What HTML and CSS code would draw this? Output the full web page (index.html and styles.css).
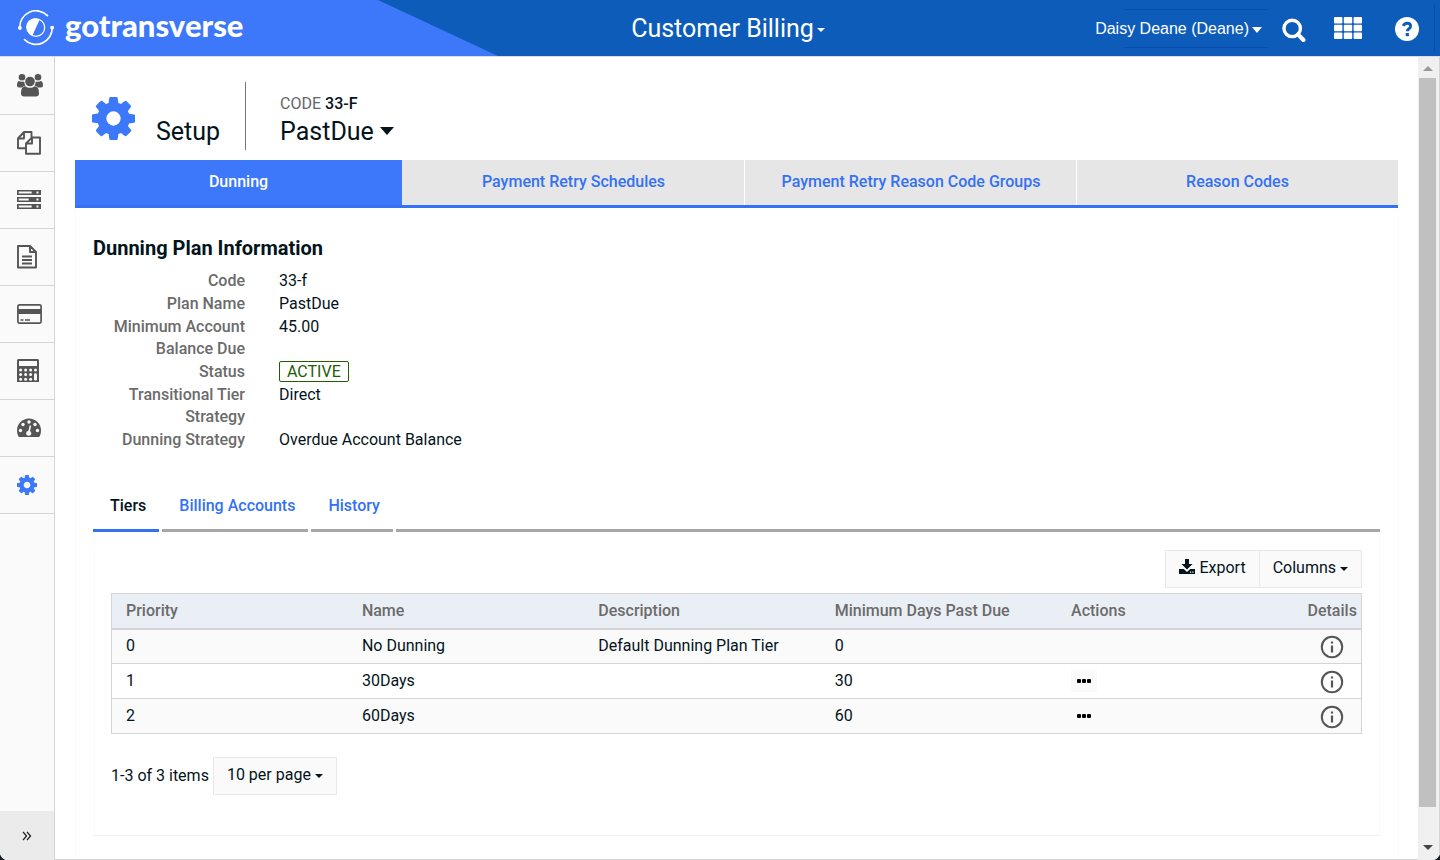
FILE: index.html
```html
<!DOCTYPE html>
<html lang="en">
<head>
<meta charset="utf-8">
<title>Customer Billing</title>
<link rel="stylesheet" href="styles.css">
</head>
<body>
<svg class="defs" aria-hidden="true">
  <symbol id="gear" viewBox="128 128 1536 1536"><path d="M1152 896q0-106-75-181t-181-75-181 75-75 181 75 181 181 75 181-75 75-181zm512-109v222q0 12-8 23t-20 13l-185 28q-19 54-39 91 35 50 107 138 10 12 10 25t-9 23q-27 37-99 108t-94 71q-12 0-26-9l-138-108q-44 23-91 38-16 136-29 186-7 28-36 28h-222q-14 0-24.5-8.5t-11.5-21.5l-28-184q-49-16-90-37l-141 107q-10 9-25 9-14 0-25-11-126-114-165-168-7-10-7-23 0-12 8-23 15-21 51-66.5t54-70.5q-27-50-41-99l-183-27q-13-2-21-12.5t-8-23.5v-222q0-12 8-23t19-13l186-28q14-46 39-92-40-57-107-138-10-12-10-24 0-10 9-23 26-36 98.5-107.5t94.5-71.5q13 0 26 10l138 107q44-23 91-38 16-136 29-186 7-28 36-28h222q14 0 24.5 8.5t11.5 21.5l28 184q49 16 90 37l142-107q9-9 24-9 13 0 25 10 129 119 165 170 7 8 7 22 0 12-8 23-15 21-51 66.5t-54 70.5q26 50 41 98l183 28q13 2 21 12.5t8 23.5z"/></symbol>
  <symbol id="info" viewBox="0 0 24 24"><circle cx="12" cy="12" r="10.2" fill="none" stroke="currentColor" stroke-width="2"/><path d="M10.900 6.400h2.200v2.200h-2.200zM10.900 10.400h2.200v7.200h-2.200z"/></symbol>
</svg>
<div class="app">
  <header class="topbar">
    <a class="brand" href="#" aria-label="gotransverse">
      <svg class="brand-mark" viewBox="0 0 36 36" fill="none" stroke="#fff" stroke-width="1.7" stroke-linecap="round">
        <path d="M1.8 18A16.2 16.2 0 0 1 29.5 5.6"/>
        <path d="M34.2 18A16.2 16.2 0 0 1 6.5 29.6"/>
        <circle cx="1.9" cy="18" r="1.1" fill="#fff"/><circle cx="34.1" cy="17.6" r="1.1" fill="#fff"/>
        <circle cx="18" cy="17.6" r="8.7" stroke-width="1.2"/>
        <path d="M21.6 9.8A8.7 8.7 0 1 0 14.4 25.4Z" fill="#fff" stroke="none"/>
      </svg>
      <span class="brand-name">gotransverse</span>
    </a>
    <button class="product" type="button">Customer Billing<i class="caret caret-sm"></i></button>
    <div class="actions">
      <button class="user" type="button">Daisy Deane (Deane)<i class="caret caret-lg"></i></button>
      <button class="icon-btn search" type="button" aria-label="Search">
        <svg width="24" height="24" viewBox="0 0 24 24" fill="none" stroke="#fff" stroke-width="3.4"><circle cx="10.2" cy="10.4" r="8.2"/><path d="M16 16.4l5.4 5.6" stroke-width="4.2" stroke-linecap="round"/></svg>
      </button>
      <button class="icon-btn apps" type="button" aria-label="Applications">
        <svg width="28" height="22" viewBox="0 0 28 22" fill="#fff"><rect width="8.4" height="6.4" rx="1"/><rect x="9.8" width="8.4" height="6.4" rx="1"/><rect x="19.6" width="8.4" height="6.4" rx="1"/><rect y="7.8" width="8.4" height="6.4" rx="1"/><rect x="9.8" y="7.8" width="8.4" height="6.4" rx="1"/><rect x="19.6" y="7.8" width="8.4" height="6.4" rx="1"/><rect y="15.6" width="8.4" height="6.4" rx="1"/><rect x="9.8" y="15.6" width="8.4" height="6.4" rx="1"/><rect x="19.6" y="15.6" width="8.4" height="6.4" rx="1"/></svg>
      </button>
      <button class="icon-btn help" type="button" aria-label="Help">
        <svg width="24" height="24" viewBox="0 0 24 24"><circle cx="12" cy="12" r="12" fill="#fff"/><path d="M8.3 8.9C9 7.2 10.3 6.3 12.1 6.3c2.100 0 3.500 1.200 3.500 2.900 0 2.500-3.300 2.600-3.300 5.100" fill="none" stroke="#0d5cb9" stroke-width="2.900"/><rect x="10.700" y="16" width="3.200" height="3.200" fill="#0d5cb9"/></svg>
      </button>
    </div>
  </header>

  <div class="body">
    <nav class="sidebar" aria-label="Main">
      <a href="#" aria-label="Customers"><svg class="users" width="26" height="24" viewBox="0 0 26 24"><circle cx="5" cy="4.200" r="3.300"/><circle cx="21" cy="4.200" r="3.300"/><path d="M0 12.500C0 9.500.8 8 2.200 8c1 .8 3.600 1.200 5 .5.300 1.800.5 3 1.300 4.200-1.500.1-2.600.8-3.500 1.800H2C.8 14.500 0 13.800 0 12.500zM26 12.500c0-3-.8-4.500-2.200-4.500-1 .8-3.600 1.200-5 .5-.3 1.800-.5 3-1.300 4.200 1.500.1 2.600.8 3.500 1.800h3c1.200 0 2-.7 2-2z"/><circle cx="13" cy="8.500" r="4.800"/><path d="M4 20.500c0-4 1-7.200 4.400-7.200 2.800 2 6.400 2 9.200 0 3.400 0 4.400 3.200 4.400 7.200 0 2-1.200 3-3 3H7c-1.800 0-3-1-3-3z"/></svg></a>
      <a href="#" aria-label="Orders"><svg width="24" height="24" viewBox="0 0 24 24" fill="none" stroke="currentColor" stroke-width="1.900" stroke-linejoin="round"><path d="M9 17.200H1V7.500L7 1h7.500v5.500M7 1v6.500H1M9 12.500l6-6h8v16.200H9zM15 6.500v6H9"/></svg></a>
      <a href="#" aria-label="Services"><svg width="24" height="20" viewBox="0 0 24 20"><path fill-rule="evenodd" d="M0 0h24v5H0zM1.700 1.600v1.800h13V1.600zM19.500 1.600v1.800h2V1.600zM0 7h24v5H0zM1.700 8.600v1.800h10V8.600zM19.500 8.600v1.800h2V8.600zM0 14h24v5H0zM1.700 15.600v1.800h13v-1.800zM19.500 15.600v1.800h2v-1.800z"/></svg></a>
      <a href="#" aria-label="Invoices"><svg width="22" height="24" viewBox="0 0 22 24" fill="none" stroke="currentColor" stroke-width="1.900" stroke-linejoin="round"><path d="M1 1h12l6 6v15.500H1zM13 1v6h6M5 11.500h10M5 15h10M5 18.500h10"/></svg></a>
      <a href="#" aria-label="Payments"><svg width="26" height="20" viewBox="0 0 26 20"><rect x=".9" y=".9" width="23.200" height="18.200" rx="1.500" fill="none" stroke="currentColor" stroke-width="1.700"/><path d="M1 5h23v5H1zM3.500 15.200h3v1.500h-3zM8 15.200h5v1.500H8z"/></svg></a>
      <a href="#" aria-label="Calculator"><svg width="22" height="24" viewBox="0 0 22 24"><path fill-rule="evenodd" d="M1.500 0h19Q22 0 22 1.500V23H0V1.500Q0 0 1.500 0zM2 2v5h18V2z"/><g fill="#fafafa"><circle cx="3.600" cy="11" r="1.500"/><circle cx="8.600" cy="11" r="1.500"/><circle cx="13.600" cy="11" r="1.500"/><circle cx="18.500" cy="11" r="1.500"/><circle cx="3.600" cy="15.600" r="1.500"/><circle cx="8.600" cy="15.600" r="1.500"/><circle cx="13.600" cy="15.600" r="1.500"/><circle cx="3.600" cy="20.200" r="1.500"/><circle cx="8.600" cy="20.200" r="1.500"/><circle cx="13.600" cy="20.200" r="1.500"/><rect x="17" y="14.200" width="3" height="7.400" rx="1.400"/></g></svg></a>
      <a href="#" aria-label="Dashboard"><svg width="24" height="20" viewBox="0 0 24 20"><path d="M1.800 19C.6 17 0 15 0 12.500a12 12 0 0 1 24 0c0 2.500-.6 4.500-1.800 6.500z"/><g fill="#fafafa"><circle cx="3.500" cy="12.500" r="1.700"/><circle cx="6" cy="6.500" r="1.700"/><circle cx="12" cy="4" r="1.700"/><circle cx="18" cy="6.500" r="1.700"/><circle cx="20.500" cy="12.500" r="1.700"/><circle cx="11.700" cy="15.200" r="2.500"/></g><path d="M11.900 14.500l1.500-7" stroke="#fafafa" stroke-width="1.500"/></svg></a>
      <a class="current" href="#" aria-label="Setup"><svg width="20" height="20"><use href="#gear"/></svg></a>
      <button class="expand" type="button" aria-label="Expand menu"><svg width="10" height="10" viewBox="0 0 10 10" fill="none" stroke="currentColor" stroke-width="1.300"><path d="M1 .8L4.500 5 1 9.200M5 .8L8.500 5 5 9.200"/></svg></button>
    </nav>

    <main class="content">
      <div class="page-head">
        <svg class="head-gear" viewBox="0 0 44 44"><use href="#gear"/></svg>
        <h1 class="head-title">Setup</h1>
        <div class="head-record">
          <div class="record-code">CODE <strong>33-F</strong></div>
          <button class="record-name" type="button">PastDue<i class="caret caret-xl"></i></button>
        </div>
      </div>

      <nav class="tabs" aria-label="Setup sections">
        <a class="tab-a active" href="#">Dunning</a>
        <a class="tab-b" href="#">Payment Retry Schedules</a>
        <a class="tab-c" href="#">Payment Retry Reason Code Groups</a>
        <a class="tab-d" href="#">Reason Codes</a>
      </nav>

      <section class="panel">
        <h2>Dunning Plan Information</h2>
        <dl class="facts">
          <dt>Code</dt><dd>33-f</dd>
          <dt>Plan Name</dt><dd>PastDue</dd>
          <dt>Minimum Account Balance Due</dt><dd>45.00</dd>
          <dt>Status</dt><dd><span class="badge">ACTIVE</span></dd>
          <dt>Transitional Tier Strategy</dt><dd>Direct</dd>
          <dt>Dunning Strategy</dt><dd>Overdue Account Balance</dd>
        </dl>

        <nav class="subtabs" aria-label="Plan details">
          <a class="active" href="#">Tiers</a>
          <a href="#">Billing Accounts</a>
          <a href="#">History</a>
          <span class="rest"></span>
        </nav>

        <div class="grid-panel">
          <div class="toolbar">
            <button class="btn" type="button"><svg class="download" width="16" height="16" viewBox="0 0 16 16"><path d="M6 0h4v5h3.500L8 10.500 2.500 5H6z"/><path fill-rule="evenodd" d="M0 10h4.800L8 13l3.200-3H16v5H0zM11 12.500v1.200h1.200v-1.200zM13.300 12.500v1.200h1.200v-1.200z"/></svg>Export</button>
            <button class="btn" type="button">Columns<i class="caret"></i></button>
          </div>
          <table>
            <thead>
              <tr><th>Priority</th><th>Name</th><th>Description</th><th>Minimum Days Past Due</th><th>Actions</th><th class="details">Details</th></tr>
            </thead>
            <tbody>
              <tr><td>0</td><td>No Dunning</td><td>Default Dunning Plan Tier</td><td>0</td><td></td><td class="details"><button type="button" aria-label="Details"><svg><use href="#info"/></svg></button></td></tr>
              <tr><td>1</td><td>30Days</td><td></td><td>30</td><td><button class="more" type="button" aria-label="Actions"><i></i><i></i><i></i></button></td><td class="details"><button type="button" aria-label="Details"><svg><use href="#info"/></svg></button></td></tr>
              <tr><td>2</td><td>60Days</td><td></td><td>60</td><td><button class="more" type="button" aria-label="Actions"><i></i><i></i><i></i></button></td><td class="details"><button type="button" aria-label="Details"><svg><use href="#info"/></svg></button></td></tr>
            </tbody>
          </table>
          <div class="pager">
            <span>1-3 of 3 items</span>
            <button class="btn" type="button">10 per page<i class="caret"></i></button>
          </div>
        </div>
      </section>
    </main>

    <div class="scrollbar" aria-hidden="true">
      <i class="arrow up"></i>
      <div class="track"><div class="thumb"></div></div>
      <i class="arrow down"></i>
    </div>
  </div>
</div>
</body>
</html>
```
FILE: styles.css
```css
* { box-sizing: border-box; }

body {
  margin: 0;
  background: #1b2027;
  color: #04141c;
  font: 16px/22px Roboto, "Liberation Sans", sans-serif;
}

a { color: inherit; text-decoration: none; }

button {
  margin: 0;
  padding: 0;
  border: 0;
  background: none;
  color: inherit;
  font: inherit;
  cursor: pointer;
}

svg { display: block; fill: currentColor; }
svg[fill="none"] { fill: none; }
.defs { position: absolute; width: 0; height: 0; }

.app {
  display: flex;
  flex-direction: column;
  min-height: 100vh;
  overflow: hidden;
  border-radius: 0 0 8px 8px;
  background: #fff;
}

.caret {
  display: inline-block;
  margin-left: 4px;
  border: 4px solid transparent;
  border-top-color: currentColor;
  border-bottom: 0;
  vertical-align: middle;
}
.caret-sm { margin-left: 3px; }
.caret-lg { margin-left: 3px; border-width: 6px 5px 0; }
.caret-xl { margin-left: 6px; border-width: 8px 7px 0; vertical-align: 5px; }

/* Top bar */
.topbar {
  display: grid;
  grid-template-columns: 1fr auto 1fr;
  align-items: center;
  height: 57px;
  border-bottom: 1px solid #dedbd8;
  background: #0d5cb9;
  color: #fff;
}
.brand {
  display: flex;
  align-items: center;
  gap: 11px;
  width: 498px;
  height: 56px;
  padding-left: 18px;
  background: #3c78f9;
  clip-path: polygon(0 0, 378px 0, 100% 100%, 0 100%);
}
.brand-mark { width: 36px; height: 36px; }
.brand-name { padding-bottom: 6px; font: 900 31px/36px Lato, sans-serif; }
.product { padding: 2px 0 0 16px; font-size: 25px; line-height: 32px; }
.actions {
  display: flex;
  align-items: center;
  justify-content: flex-end;
  height: 48px;
  margin-right: 5px;
  border-right: 1px solid #064fae;
}
.user {
  height: 39px;
  padding: 2px 6px 0 0;
  background:
    linear-gradient(#064fae, #064fae) right top / 144px 1px no-repeat,
    linear-gradient(#064fae, #064fae) right bottom / 144px 1px no-repeat;
  font-family: "Liberation Sans", Arial, sans-serif;
}
.search { margin: 4px 0 0 14px; }
.apps { margin-left: 28px; }
.help { margin: 2px 15px 0 33px; }

/* Shell */
.body { display: flex; flex: 1; }
.sidebar {
  display: flex;
  flex-direction: column;
  width: 55px;
  padding-top: 1px;
  border-right: 1px solid #d4d4d4;
  background: #fafafa;
  color: #555;
}
.sidebar a {
  display: flex;
  align-items: center;
  height: 57px;
  padding-left: 17px;
  border-bottom: 1px solid #d4d4d4;
}
.sidebar .current { color: #3c78f9; }
.users { margin-bottom: 3px; }
.expand {
  display: flex;
  align-items: center;
  justify-content: center;
  height: 49px;
  margin-top: auto;
  background: #ebebeb;
  color: #222;
}
.content {
  flex: 1;
  min-width: 0;
  padding: 25px 20px 0;
  border-bottom: 1px solid #d4d4d4;
}

/* Page heading */
.page-head { display: flex; align-items: center; height: 68px; padding-left: 17px; }
.head-gear { width: 43px; height: 43px; margin-top: 4px; color: #3c78f9; }
.head-title {
  align-self: flex-end;
  margin: 0;
  padding: 0 25px 3px 21px;
  font-size: 25px;
  font-weight: 400;
  line-height: 30px;
}
.head-record { height: 68px; padding: 11px 0 0 34px; border-left: 1px solid #777; }
.record-code { color: #666; }
.record-code strong { color: #04141c; font-weight: 500; }
.record-name { font-size: 25px; line-height: 34px; }

/* Section tabs */
.tabs { display: flex; margin-top: 10px; }
.tabs a {
  height: 48px;
  padding: 11px 0;
  border-bottom: 3px solid #3571f3;
  background: #e6e6e6;
  color: #3571f3;
  font-weight: 500;
  text-align: center;
  box-shadow: inset -1px 0 0 #fff;
}
.tabs a:last-child { box-shadow: none; }
.tabs .active { background: #3c78f9; color: #fff; box-shadow: none; }
.tab-a { flex: 327 0 0; }
.tab-b { flex: 343 0 0; }
.tab-c { flex: 332 0 0; }
.tab-d { flex: 321 0 0; }

/* Plan information */
.panel { padding: 28px 17px 20px; border: solid #fafafa; border-width: 0 1px; }
h2 { margin: 0 0 10px; font-size: 20px; font-weight: 700; line-height: 24px; }
.facts {
  display: grid;
  grid-template-columns: 152px 1fr;
  gap: 1px 34px;
  margin: 0;
}
.facts dt { color: #6b6b6b; font-weight: 500; text-align: right; }
.facts dd { margin: 0; }
.badge {
  display: inline-block;
  padding: 0 7px;
  border: 1px solid #245c05;
  border-radius: 2px;
  color: #245c05;
  line-height: 19px;
}

.subtabs { display: flex; gap: 3px; margin-top: 36px; }
.subtabs a, .rest {
  height: 45px;
  padding: 8px 13px 0 17px;
  border-bottom: 3px solid #a6a6a6;
  color: #3571f3;
  font-weight: 500;
}
.subtabs .active { border-color: #3571f3; color: #04141c; }
.rest { flex: 1; }

/* Tier grid */
.grid-panel {
  padding: 18px 17px 40px;
  border: 1px solid #fafafa;
  border-top: 0;
  border-bottom-color: #efefef;
}
.toolbar { display: flex; justify-content: flex-end; margin-bottom: 5px; }
.btn {
  height: 38px;
  padding: 0 13px 2px;
  border: 1px solid #e8e8e8;
  background: #fafafa;
}
.btn + .btn { margin-left: -1px; }
.download { display: inline-block; margin-right: 4px; vertical-align: -2px; }

table {
  width: 100%;
  table-layout: fixed;
  border-collapse: collapse;
  border: 1px solid #d4d4d4;
}
th, td { height: 35px; padding: 0 0 0 14px; border-bottom: 1px solid #d4d4d4; text-align: left; }
th { border-bottom-width: 2px; background: #eaeff6; color: #6b6b6b; font-weight: 500; }
tbody tr:nth-child(odd) { background: #fafafa; }
.details { width: 68px; padding-right: 5px; text-align: center; color: #555; }
th.details { color: #6b6b6b; }
.details button { display: block; margin: 1px auto 0; }
.details svg { width: 24px; height: 24px; }
.more {
  display: flex;
  align-items: center;
  justify-content: center;
  gap: 1px;
  width: 26px;
  height: 22px;
  background: #fafafa;
}
.more i { width: 4px; height: 4px; border-radius: 1px; background: #000; }

.pager { display: flex; align-items: center; gap: 4px; margin-top: 23px; }

/* Scroll bar */
.scrollbar {
  display: flex;
  flex-direction: column;
  align-items: center;
  width: 22px;
  padding: 9px 2px 10px 0;
  border-right: 1px solid #d4d4d4;
  background: #f0f0f0;
}
.arrow { border: 5px solid transparent; }
.up { border-top: 0; border-bottom-color: #999; }
.down { border-bottom: 0; border-top-color: #444; }
.track { flex: 1; width: 17px; margin: 7px 0 0; }
.thumb { height: 95%; background: #c0c0c0; }
```
